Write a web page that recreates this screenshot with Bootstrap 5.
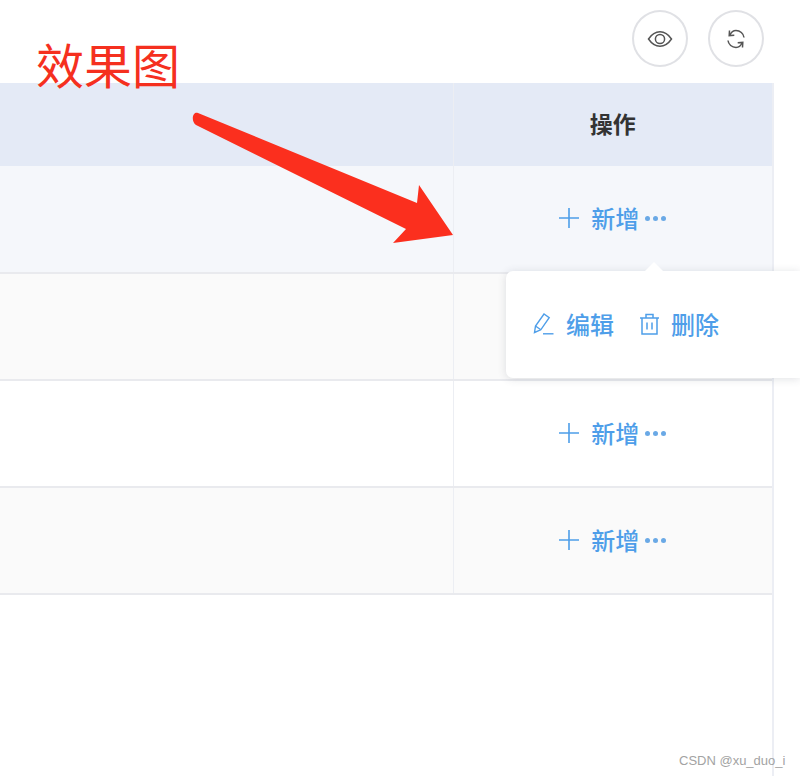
<!DOCTYPE html>
<html lang="zh-CN">
<head>
    <meta charset="UTF-8" />
    <meta name="viewport" content="width=device-width, initial-scale=1.0" />
    <title>效果图</title>
    <link href="https://cdn.jsdelivr.net/npm/bootstrap@5.3.0/dist/css/bootstrap.min.css" rel="stylesheet" />
    <style>
        html, body { height: 100%; margin: 0; overflow: hidden; }
        body { font-family: "Noto Sans CJK SC", "Liberation Sans", sans-serif; background: #fff; }

        .page { width: 800px; height: 776px; }
        .toolbar { height: 83px; width: 773px; padding: 10px 9px 0 0; gap: 20px; }
        .tool-btn {
            width: 56px; height: 57px; padding: 0;
            border: 2px solid #e0e1e5; border-radius: 50%; background: #fff; color: #555;
        }

        .table-wrap { width: 774px; height: 693px; border-right: 2px solid #eceef4; }
        .data-table { width: 772px; table-layout: fixed; border-collapse: collapse; margin: 0; }
        .data-table th, .data-table td { padding: 0; text-align: center; vertical-align: middle; }
        .data-table .col-ops { width: 319px; border-left: 1px solid #eceef3; }
        .data-table thead tr { height: 83px; background: #e4eaf6; }
        .data-table thead th { font-size: 23px; font-weight: 700; color: #333; padding-bottom: 3px; }
        .data-table tbody tr { height: 107px; border-bottom: 2px solid #e9eaee; }
        .data-table tbody td.col-ops { padding: 1px 0 0 0; }
        .row-hover { background: #f5f7fb; }
        .row-odd { background: #fff; }
        .row-even { background: #fafafa; }

        .op-link { color: #4e9ee9; font-size: 24px; font-weight: 500; text-decoration: none; line-height: 1; }
        .op-add { gap: 12px; }
        .op-more { gap: 3px; margin-left: 6px; padding-top: 1px; }
        .op-more i { width: 5px; height: 5px; border-radius: 50%; background: #6aa9e6; }

        .pop {
            position: absolute; left: 506px; top: 271px; width: 294px; height: 107px;
            padding: 0 0 2px 27px; gap: 25px;
            background: #fff; border-radius: 7px 0 0 7px;
            box-shadow: 0 1px 8px rgba(60, 70, 90, .16);
        }
        .pop::before {
            content: ""; position: absolute; left: 138px; top: -9px;
            border-left: 10px solid transparent; border-right: 10px solid transparent;
            border-bottom: 10px solid #fff;
        }
        .pop .op-link { gap: 11px; }

        .mark-text {
            position: absolute; left: 36px; top: 32px;
            font-size: 48px; line-height: 62px; color: #f5301f; font-weight: 400;
        }
        .mark-arrow { position: absolute; left: 0; top: 0; pointer-events: none; }
        .watermark {
            position: absolute; left: 679px; top: 753px;
            font-family: "Liberation Sans", sans-serif; font-size: 13px; line-height: 16px; color: #a3a3a3;
        }
    </style>
</head>
<body>
    <div class="page position-relative">
        <div class="toolbar d-flex justify-content-end align-items-start">
            <button class="tool-btn d-flex align-items-center justify-content-center" type="button">
                <svg width="26" height="26" viewBox="0 0 26 26" fill="none" stroke="currentColor" stroke-width="1.5">
                    <path d="M1.5 13C4.5 8.6 8.5 5.800 13 5.800S21.5 8.6 24.5 13C21.5 17.4 17.5 20.200 13 20.200S4.500 17.400 1.500 13Z"/>
                    <circle cx="13" cy="13" r="4.600"/>
                </svg>
            </button>
            <button class="tool-btn d-flex align-items-center justify-content-center" type="button">
                <svg width="24" height="24" viewBox="0 0 24 24" fill="none" stroke="currentColor" stroke-width="1.500">
                    <path d="M6 8C7.200 5.200 9.500 3.600 12 3.600C16 3.600 19.600 6.500 20 10.500"/>
                    <path d="M5.500 3.500L5.200 8.600L10.300 8.300"/>
                    <path d="M18 16C16.800 18.800 14.500 20.400 12 20.400C8 20.400 4.400 17.500 4 13.500"/>
                    <path d="M18.500 20.500L18.800 15.400L13.700 15.700"/>
                </svg>
            </button>
        </div>

        <div class="table-wrap">
            <table class="data-table">
                <thead>
                    <tr>
                        <th></th>
                        <th class="col-ops">操作</th>
                    </tr>
                </thead>
                <tbody>
                    <tr class="row-hover">
                        <td></td>
                        <td class="col-ops">
                            <a class="op-link d-inline-flex align-items-center" href="#">
                                <span class="op-add d-inline-flex align-items-center">
                                    <svg width="20" height="20" viewBox="0 0 20 20" stroke="currentColor" stroke-width="1.600"><path d="M10 0V20M0 10H20"/></svg>新增
                                </span>
                                <span class="op-more d-inline-flex"><i></i><i></i><i></i></span>
                            </a>
                        </td>
                    </tr>
                    <tr class="row-even">
                        <td></td>
                        <td class="col-ops"></td>
                    </tr>
                    <tr class="row-odd">
                        <td></td>
                        <td class="col-ops">
                            <a class="op-link d-inline-flex align-items-center" href="#">
                                <span class="op-add d-inline-flex align-items-center">
                                    <svg width="20" height="20" viewBox="0 0 20 20" stroke="currentColor" stroke-width="1.600"><path d="M10 0V20M0 10H20"/></svg>新增
                                </span>
                                <span class="op-more d-inline-flex"><i></i><i></i><i></i></span>
                            </a>
                        </td>
                    </tr>
                    <tr class="row-even">
                        <td></td>
                        <td class="col-ops">
                            <a class="op-link d-inline-flex align-items-center" href="#">
                                <span class="op-add d-inline-flex align-items-center">
                                    <svg width="20" height="20" viewBox="0 0 20 20" stroke="currentColor" stroke-width="1.600"><path d="M10 0V20M0 10H20"/></svg>新增
                                </span>
                                <span class="op-more d-inline-flex"><i></i><i></i><i></i></span>
                            </a>
                        </td>
                    </tr>
                </tbody>
            </table>
        </div>

        <!-- popover over row 2 -->
        <div class="pop d-flex align-items-center">
            <a class="op-link d-inline-flex align-items-center" href="#">
                <svg width="22" height="24" viewBox="0 0 22 24" fill="none" stroke="currentColor" stroke-width="1.400">
                    <path d="M1.500 20.500L2.500 14L11 2L16.200 5.600L7.800 17.800L1.500 20.500Z"/>
                    <path d="M2.500 14L7.800 17.800"/>
                    <path d="M10 21.800H20.500"/>
                </svg>编辑
            </a>
            <a class="op-link d-inline-flex align-items-center" href="#">
                <svg width="21" height="24" viewBox="0 0 21 24" fill="none" stroke="currentColor" stroke-width="1.500">
                    <path d="M1 6H20"/>
                    <path d="M7 6V2.500H14V6"/>
                    <path d="M3 6V22H18V6"/>
                    <path d="M8 10.500V17.500M13 10.500V17.500"/>
                </svg>删除
            </a>
        </div>

        <!-- red annotation drawn on top of the screenshot -->
        <div class="mark-text">效果图</div>
        <svg class="mark-arrow" width="800" height="776" viewBox="0 0 800 776">
            <path fill="#fb2f1e" d="M198 113L417 203L419 185L453 235L393 243L406 229L196 125C191 122 192 111 198 113Z"/>
        </svg>
        <div class="watermark">CSDN @xu_duo_i</div>
    </div>

    <script src="https://cdn.jsdelivr.net/npm/bootstrap@5.3.0/dist/js/bootstrap.bundle.min.js"></script>
</body>
</html>
